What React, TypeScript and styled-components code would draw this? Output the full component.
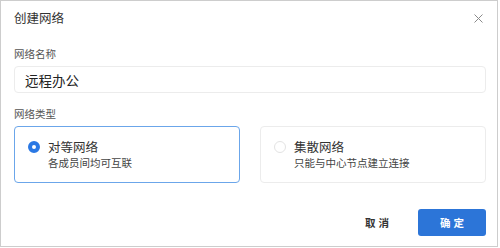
import React, { useState } from "react";
import styled, { createGlobalStyle } from "styled-components";

const Global = createGlobalStyle`
  html, body { margin: 0; padding: 0; background: #ffffff; }
  body { font-family: "Noto Sans CJK SC", "Noto Sans", sans-serif; }
  * { box-sizing: border-box; }
`;

const Dialog = styled.div`
  width: 498px;
  height: 247px;
  border: 1px solid #cdcdcd;
  background: #ffffff;
  display: flex;
  flex-direction: column;
`;

const Header = styled.div`
  height: 34px;
  padding: 0 13px 0 13px;
  display: flex;
  align-items: center;
  justify-content: space-between;
`;

const Title = styled.div`
  font-size: 12.5px;
  color: #333333;
  line-height: 16px;
`;

const Close = styled.button`
  width: 12px;
  height: 12px;
  padding: 0;
  border: none;
  background: transparent;
  display: flex;
  align-items: center;
  justify-content: center;
  cursor: pointer;
  margin-top: 1px;
`;

const Body = styled.div`
  padding: 0 11px 0 13px;
  display: flex;
  flex-direction: column;
`;

const Label = styled.div<{ $top: number }>`
  margin-top: ${(p) => p.$top}px;
  font-size: 10.5px;
  line-height: 16px;
  color: #555555;
`;

const Input = styled.input`
  margin-top: 4px;
  height: 27px;
  width: 100%;
  border: 1px solid #ececec;
  border-radius: 4px;
  padding: 0 10px;
  font-family: inherit;
  font-size: 13.5px;
  color: #222222;
  outline: none;
`;

const Cards = styled.div`
  margin-top: 4px;
  display: grid;
  grid-template-columns: 1fr 1fr;
  gap: 20px;
`;

const Card = styled.div<{ $active: boolean }>`
  height: 57px;
  border: 1px solid ${(p) => (p.$active ? "#6ba6ea" : "#ececec")};
  border-radius: 4px;
  padding: 12px 12px 0 13px;
  display: grid;
  grid-template-columns: 12px 1fr;
  column-gap: 8px;
  align-items: start;
  cursor: pointer;
`;

const Radio = styled.span<{ $active: boolean }>`
  width: 12px;
  height: 12px;
  margin-top: 2px;
  border-radius: 50%;
  background: #ffffff;
  border: ${(p) => (p.$active ? "4px solid #2a78e4" : "1px solid #e3e3e3")};
`;

const CardText = styled.div`
  display: flex;
  flex-direction: column;
`;

const CardTitle = styled.div`
  font-size: 12.5px;
  line-height: 16px;
  color: #333333;
`;

const CardDesc = styled.div`
  font-size: 10.5px;
  line-height: 16px;
  color: #444444;
`;

const Footer = styled.div`
  margin-top: 26px;
  padding: 0 11px 0 13px;
  display: flex;
  justify-content: flex-end;
  gap: 11px;
`;

const Button = styled.button<{ $primary?: boolean }>`
  height: 27px;
  width: ${(p) => (p.$primary ? 68 : 60)}px;
  border: none;
  border-radius: 3px;
  font-family: inherit;
  font-size: 10.5px;
  font-weight: 600;
  letter-spacing: 3px;
  padding: 0 0 0 3px;
  background: ${(p) => (p.$primary ? "#2c75d8" : "transparent")};
  color: ${(p) => (p.$primary ? "#ffffff" : "#333333")};
  cursor: pointer;
`;

const options = [
  { key: "p2p", title: "对等网络", desc: "各成员间均可互联" },
  { key: "hub", title: "集散网络", desc: "只能与中心节点建立连接" },
];

export default function App() {
  const [name, setName] = useState("远程办公");
  const [type, setType] = useState("p2p");
  return (
    <>
      <Global />
      <Dialog>
        <Header>
          <Title>创建网络</Title>
          <Close aria-label="关闭">
            <svg width="9" height="9" viewBox="0 0 9 9">
              <path d="M0.5 0.5 L8.5 8.5 M8.5 0.5 L0.5 8.5" stroke="#8a8a8a" strokeWidth="1" />
            </svg>
          </Close>
        </Header>
        <Body>
          <Label $top={11}>网络名称</Label>
          <Input value={name} onChange={(e) => setName(e.target.value)} />
          <Label $top={13}>网络类型</Label>
          <Cards>
            {options.map((o) => (
              <Card key={o.key} $active={type === o.key} onClick={() => setType(o.key)}>
                <Radio $active={type === o.key} />
                <CardText>
                  <CardTitle>{o.title}</CardTitle>
                  <CardDesc>{o.desc}</CardDesc>
                </CardText>
              </Card>
            ))}
          </Cards>
        </Body>
        <Footer>
          <Button>取消</Button>
          <Button $primary>确定</Button>
        </Footer>
      </Dialog>
    </>
  );
}
